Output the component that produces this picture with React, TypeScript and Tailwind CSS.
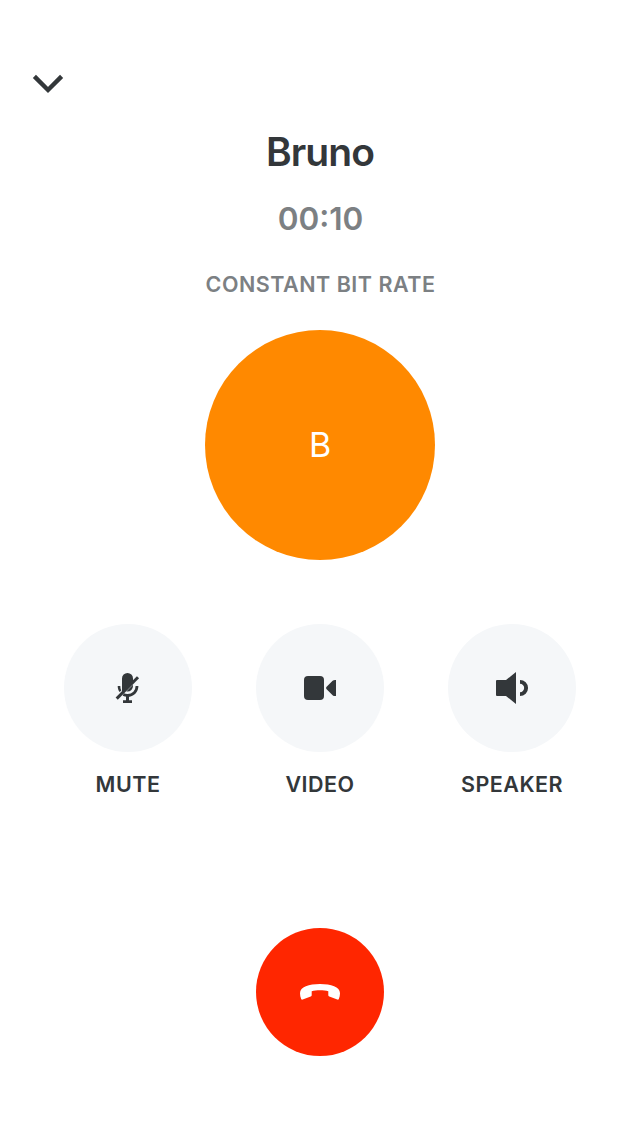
import type { ReactNode } from "react";

function ChevronIcon() {
  return (
    <svg width="32" height="20" viewBox="0 0 32 20" fill="none" aria-hidden="true">
      <path d="M2.400 2.400 16 16 29.600 2.400" stroke="#33373a" strokeWidth="4.400" />
    </svg>
  );
}

function MuteIcon() {
  return (
    <svg width="48" height="48" viewBox="0 0 48 48" fill="none" aria-hidden="true">
      <path d="M18 28V14.500a5.500 5.500 0 0 1 11 0v2.500Z" fill="#33373a" />
      <path d="M29 20.800V22a5.500 5.500 0 0 1-5.500 5.500h-1.200Z" fill="#33373a" />
      <path d="M12.700 34.600 34 13.300" stroke="#33373a" strokeWidth="3" />
      <path d="M13.700 22c0 2.300.6 4.300 1.900 6l1.700-1.600C16.600 25.200 16.300 23.700 16.300 22Z" fill="#33373a" />
      <path d="M33 22c0 5.400-3.900 9.400-9.500 9.400-1.600 0-3-.3-4.200-.9" stroke="#33373a" strokeWidth="2.800" />
      <path d="M22 31h3v5.300h3V39h-9v-2.700h3Z" fill="#33373a" />
    </svg>
  );
}

function VideoIcon() {
  return (
    <svg width="48" height="48" viewBox="0 0 48 48" fill="#33373a" aria-hidden="true">
      <rect x="8" y="12" width="20" height="24" rx="4" />
      <path d="M30.600 22.800 36.600 16.800Q38 15.600 40 16V32Q38 32.400 36.600 31.200L30.600 25.200Q29.400 24 30.600 22.800Z" />
    </svg>
  );
}

function SpeakerIcon() {
  return (
    <svg width="48" height="48" viewBox="0 0 48 48" fill="none" aria-hidden="true">
      <path d="M9 16h9L28 8v32l-10-8H9a1 1 0 0 1-1-1V17a1 1 0 0 1 1-1Z" fill="#33373a" />
      <path d="M32 17.900a6.100 6.100 0 0 1 0 12.200" stroke="#33373a" strokeWidth="3.900" />
    </svg>
  );
}

function HangUpIcon() {
  return (
    <svg width="40" height="16" viewBox="0 0 40 16" fill="white" aria-hidden="true">
      <path d="M20 0C9 0 0 2.800 0 9.300c0 2 .4 4 1.200 5.700.3.700.8.900 1.500.600l8-3c.700-.3 1-.700 1-1.400V7.300C14 6.500 17 6.200 20 6.200s6 .3 8.300 1.100v3.900c0 .7.3 1.100 1 1.400l8 3c.7.3 1.200.1 1.500-.6.8-1.700 1.200-3.700 1.200-5.700C40 2.800 31 0 20 0Z" />
    </svg>
  );
}

function CallControl({ label, children }: { label: string; children: ReactNode }) {
  return (
    <div className="flex w-32 flex-col items-center">
      <button aria-label={label} className="flex size-32 items-center justify-center rounded-full bg-[#f5f7f9]">
        {children}
      </button>
      <span className="mt-4 text-[21.5px] leading-8 font-semibold tracking-[0.5px]">{label}</span>
    </div>
  );
}

export default function App() {
  return (
    <main className="flex h-[1136px] w-[640px] flex-col items-center bg-white pt-[74px] font-['Inter',sans-serif] text-[#33373a]">
      <button aria-label="Minimize" className="ml-8 h-5 self-start">
        <ChevronIcon />
      </button>
      <h1 className="mt-[34px] text-[39px] leading-[48px] font-semibold tracking-[-0.9px]">Bruno</h1>
      <p className="mt-[23px] pl-px text-[31.5px] leading-10 font-semibold text-[#7c8083]">00:10</p>
      <p className="mt-[29px] pl-px text-[21.5px] leading-8 font-semibold tracking-[0.5px] text-[#7c8083]">CONSTANT BIT RATE</p>
      <div className="mt-[30px] flex size-[230px] items-center justify-center rounded-full bg-[#ff8900] pb-px text-[34px] text-white">
        B
      </div>
      <div className="mt-16 flex gap-16">
        <CallControl label="MUTE"><MuteIcon /></CallControl>
        <CallControl label="VIDEO"><VideoIcon /></CallControl>
        <CallControl label="SPEAKER"><SpeakerIcon /></CallControl>
      </div>
      <button aria-label="End call" className="mt-32 flex size-32 items-center justify-center rounded-full bg-[#ff2600]">
        <HangUpIcon />
      </button>
    </main>
  );
}
